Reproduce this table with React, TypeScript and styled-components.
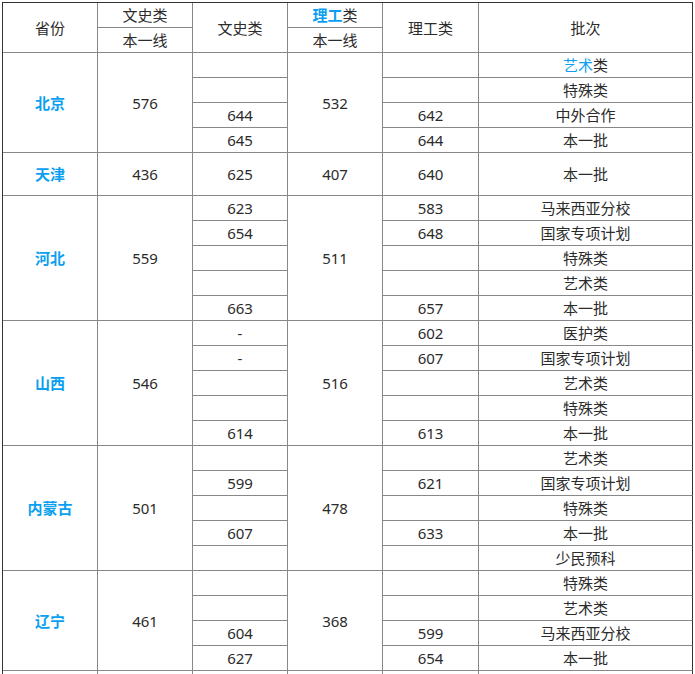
import React from 'react';
import styled, { createGlobalStyle } from 'styled-components';

const GlobalStyle = createGlobalStyle`
  body {
    margin: 0;
    background: #ffffff;
    font-family: "Noto Sans", "Noto Sans CJK SC", sans-serif;
  }
`;

const Page = styled.div`
  padding: 2px 0 0 2px;
`;

const Table = styled.table`
  border-collapse: separate;
  border-spacing: 0;
  table-layout: fixed;
  width: 691px;
  border-top: 1px solid #333333;
  border-left: 1px solid #333333;
  font-size: 15px;
  color: #2b2b2b;
`;

const Col = styled.col<{ $w: number }>`
  width: ${p => p.$w}px;
`;

const Cell = styled.td<{ $edge?: boolean; $tall?: boolean }>`
  box-sizing: border-box;
  height: ${p => (p.$tall ? 43 : 25)}px;
  padding: 0;
  text-align: center;
  vertical-align: middle;
  line-height: 20px;
  white-space: nowrap;
  border-right: 1px solid ${p => (p.$edge ? '#333333' : '#888888')};
  border-bottom: 1px solid #888888;
`;

const Province = styled.span`
  color: #0a9ff0;
  font-weight: bold;
`;

const Accent = styled.span<{ $bold?: boolean }>`
  color: #0a9ff0;
  font-weight: ${p => (p.$bold ? 'bold' : 'normal')};
`;

type Line = [string, string, React.ReactNode];

interface Block {
  name: string;
  wen: string;
  li: string;
  rows: Line[];
  tall?: boolean;
}

const blocks: Block[] = [
  {
    name: '北京',
    wen: '576',
    li: '532',
    rows: [
      ['', '', <><Accent>艺术</Accent>类</>],
      ['', '', '特殊类'],
      ['644', '642', '中外合作'],
      ['645', '644', '本一批'],
    ],
  },
  {
    name: '天津',
    wen: '436',
    li: '407',
    tall: true,
    rows: [['625', '640', '本一批']],
  },
  {
    name: '河北',
    wen: '559',
    li: '511',
    rows: [
      ['623', '583', '马来西亚分校'],
      ['654', '648', '国家专项计划'],
      ['', '', '特殊类'],
      ['', '', '艺术类'],
      ['663', '657', '本一批'],
    ],
  },
  {
    name: '山西',
    wen: '546',
    li: '516',
    rows: [
      ['-', '602', '医护类'],
      ['-', '607', '国家专项计划'],
      ['', '', '艺术类'],
      ['', '', '特殊类'],
      ['614', '613', '本一批'],
    ],
  },
  {
    name: '内蒙古',
    wen: '501',
    li: '478',
    rows: [
      ['', '', '艺术类'],
      ['599', '621', '国家专项计划'],
      ['', '', '特殊类'],
      ['607', '633', '本一批'],
      ['', '', '少民预科'],
    ],
  },
  {
    name: '辽宁',
    wen: '461',
    li: '368',
    rows: [
      ['', '', '特殊类'],
      ['', '', '艺术类'],
      ['604', '599', '马来西亚分校'],
      ['627', '654', '本一批'],
    ],
  },
];

const widths = [95, 95, 95, 95, 96, 214];

export default function App() {
  return (
    <Page>
      <GlobalStyle />
      <Table>
        <colgroup>
          {widths.map((w, i) => (
            <Col key={i} $w={w} />
          ))}
        </colgroup>
        <tbody>
          <tr>
            <Cell rowSpan={2}>省份</Cell>
            <Cell>文史类</Cell>
            <Cell rowSpan={2}>文史类</Cell>
            <Cell>
              <Accent $bold>理工</Accent>类
            </Cell>
            <Cell rowSpan={2}>理工类</Cell>
            <Cell rowSpan={2} $edge>
              批次
            </Cell>
          </tr>
          <tr>
            <Cell>本一线</Cell>
            <Cell>本一线</Cell>
          </tr>
          {blocks.map(b =>
            b.rows.map((r, i) => (
              <tr key={b.name + i}>
                {i === 0 && (
                  <>
                    <Cell rowSpan={b.rows.length}>
                      <Province>{b.name}</Province>
                    </Cell>
                    <Cell rowSpan={b.rows.length}>{b.wen}</Cell>
                  </>
                )}
                <Cell $tall={b.tall}>{r[0]}</Cell>
                {i === 0 && <Cell rowSpan={b.rows.length}>{b.li}</Cell>}
                <Cell $tall={b.tall}>{r[1]}</Cell>
                <Cell $tall={b.tall} $edge>
                  {r[2]}
                </Cell>
              </tr>
            ))
          )}
          <tr>
            <Cell />
            <Cell />
            <Cell />
            <Cell />
            <Cell />
            <Cell $edge />
          </tr>
        </tbody>
      </Table>
    </Page>
  );
}
